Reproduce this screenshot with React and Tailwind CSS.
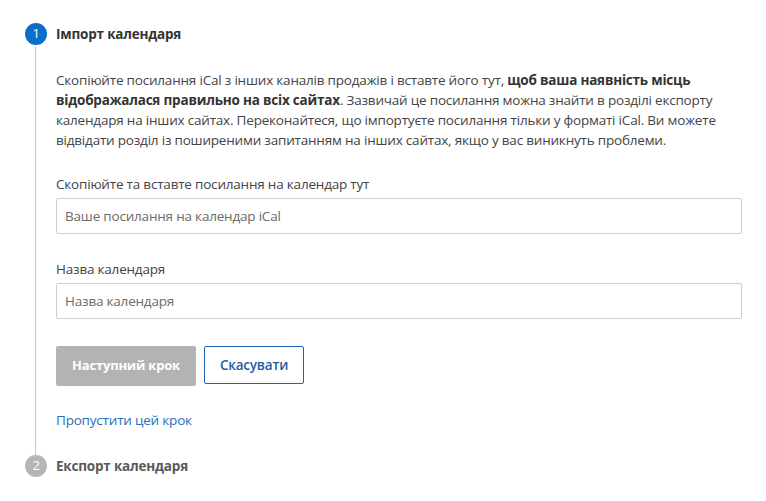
import React, { useState } from "react";

const font = {
  fontFamily: '"Segoe UI", "Open Sans", "Noto Sans", sans-serif',
  letterSpacing: "-0.2px",
};

const StepBadge = ({ n, active }) => (
  <div
    className={`w-[22px] h-[22px] rounded-full flex items-center justify-center text-[13px] text-white shrink-0 ${
      active ? "bg-[#0b6ec7]" : "bg-[#b5b5b5]"
    }`}
  >
    {n}
  </div>
);

export default function App() {
  const [url, setUrl] = useState("");
  const [name, setName] = useState("");

  return (
    <div className="w-[766px] h-[501px] bg-white text-[#333] overflow-hidden" style={font}>
      <div className="pt-[23px] pl-[25px] pr-[24px]">
        {/* step 1 */}
        <div className="flex items-center gap-[9px] h-[22px]">
          <StepBadge n="1" active />
          <h2 className="text-[13.5px] font-bold text-[#333]">Імпорт календаря</h2>
        </div>

        <div className="ml-[10px] border-l border-[#c6c6c6] pl-[20px] pt-[24px] pb-[24px] mt-[1px]">
          <p className="text-[13.5px] leading-[20px] text-[#444]">
            Скопіюйте посилання iCal з інших каналів продажів і вставте його тут,{" "}
            <b className="font-bold text-[#333]">
              щоб ваша наявність місць відображалася правильно на всіх сайтах
            </b>
            . Зазвичай це посилання можна знайти в розділі експорту календаря на інших сайтах.
            Переконайтеся, що імпортуєте посилання тільки у форматі iCal. Ви можете відвідати
            розділ із поширеними запитанням на інших сайтах, якщо у вас виникнуть проблеми.
          </p>

          <label className="block mt-[24px] text-[13.5px] leading-[20px] text-[#444]">
            Скопіюйте та вставте посилання на календар тут
          </label>
          <input
            value={url}
            onChange={(e) => setUrl(e.target.value)}
            placeholder="Ваше посилання на календар iCal"
            className="mt-[4px] block w-[686px] h-[36px] border border-[#cfcfcf] rounded-[2px] px-[8px] text-[13.5px] text-[#333] placeholder:text-[#6b6b6b] outline-none"
          />

          <label className="block mt-[25px] text-[13.5px] leading-[20px] text-[#444]">
            Назва календаря
          </label>
          <input
            value={name}
            onChange={(e) => setName(e.target.value)}
            placeholder="Назва календаря"
            className="mt-[4px] block w-[686px] h-[36px] border border-[#cfcfcf] rounded-[2px] px-[8px] text-[13.5px] text-[#333] placeholder:text-[#6b6b6b] outline-none"
          />

          <div className="flex gap-[8px] mt-[27px]">
            <button
              disabled
              className="w-[140px] h-[40px] rounded-[2px] bg-[#b3b3b3] text-white text-[13px] font-bold"
            >
              Наступний крок
            </button>
            <button className="w-[100px] h-[38px] rounded-[2px] border border-[#1c64ad] bg-white text-[#1c5fa6] text-[13.5px] font-semibold">
              Скасувати
            </button>
          </div>

          <a href="#" className="inline-block mt-[24px] text-[13.5px] leading-[20px] text-[#2870b8]">
            Пропустити цей крок
          </a>
        </div>

        {/* step 2 */}
        <div className="flex items-center gap-[9px] h-[22px]">
          <StepBadge n="2" />
          <h2 className="text-[13.5px] font-bold text-[#595959]">Експорт календаря</h2>
        </div>
      </div>
    </div>
  );
}
